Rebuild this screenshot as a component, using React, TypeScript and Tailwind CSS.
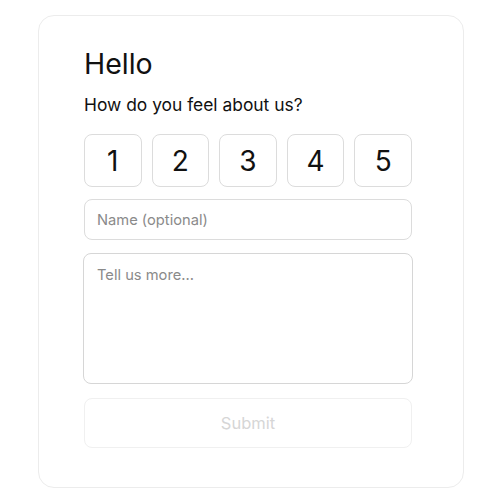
import { useState } from "react";

function App() {
  const [rating, setRating] = useState<number | null>(null);

  return (
    <div className="w-[500px] h-[500px] bg-white font-['Inter',sans-serif] text-[#111] pt-[15px] pl-[38px]">
      <div className="w-[426px] h-[473px] rounded-[16px] border border-[#ececec] bg-white pl-[45px] pt-[30px]">
        <h1 className="text-[28.5px] leading-[36px] font-normal">Hello</h1>
        <p className="mt-[12px] text-[17.4px] leading-[22px]">How do you feel about us?</p>

        <div className="mt-[18px] flex w-[328px] gap-[10px]">
          {[1, 2, 3, 4, 5].map((n) => (
            <button
              key={n}
              onClick={() => setRating(n)}
              className={
                "h-[53px] flex-1 rounded-[8px] border border-[#dcdcdc] bg-white text-[28px] leading-none " +
                (rating === n ? "border-[#888]" : "")
              }
            >
              {n}
            </button>
          ))}
        </div>

        <input
          placeholder="Name (optional)"
          className="mt-[12px] block h-[41px] w-[328px] rounded-[8px] border border-[#dcdcdc] px-[12px] text-[14.7px] placeholder:text-[#8a8a8a] outline-none"
        />

        <textarea
          placeholder="Tell us more..."
          className="mt-[13px] block h-[131px] w-[330px] -ml-[1px] resize-none rounded-[8px] border border-[#d6d6d6] px-[13px] py-[10px] text-[14.7px] placeholder:text-[#8a8a8a] outline-none"
        />

        <button
          disabled
          className="mt-[14px] block h-[50px] w-[328px] rounded-[8px] border border-[#f0f0f0] text-[16.5px] text-[#d6d6d6]"
        >
          Submit
        </button>
      </div>
    </div>
  );
}

export default App;
